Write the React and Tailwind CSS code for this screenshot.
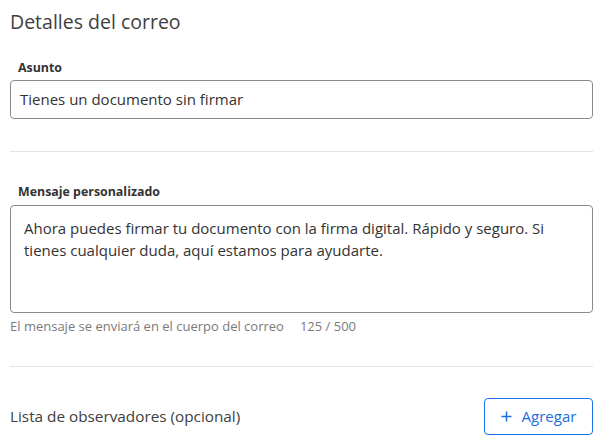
export default function App() {
  return (
    <div className="w-[606px] h-[446px] bg-white overflow-hidden font-['Open_Sans',sans-serif] text-[#3a3a3a]">
      <div className="px-[10px] pt-[10px] w-[603px]">
        <h2 className="text-[19.5px] leading-[24px] font-medium text-[#404040]">Detalles del correo</h2>

        <div className="mt-[26px] pl-[8px] text-[12.4px] leading-[16px] font-bold text-[#333]">Asunto</div>
        <div className="mt-[4px] h-[39px] border border-[#8a8a8a] rounded-[4px] flex items-center px-[9px] text-[15px] text-[#333]">
          Tienes un documento sin firmar
        </div>

        <div className="mt-[32px] h-px bg-[#e2e2e2]" />

        <div className="mt-[32px] pl-[8px] text-[12.4px] leading-[16px] font-bold text-[#333]">Mensaje personalizado</div>
        <div className="mt-[5px] h-[108px] border border-[#8a8a8a] rounded-[4px] px-[13px] pt-[11px] text-[15px] leading-[22px] text-[#333]">
          Ahora puedes firmar tu documento con la firma digital. Rápido y seguro. Si tienes cualquier duda, aquí estamos para ayudarte.
        </div>
        <div className="mt-[5px] flex text-[13px] leading-[16px] text-[#7a7a7a] font-medium">
          <span>El mensaje se enviará en el cuerpo del correo</span>
          <span className="ml-[16px]">125 / 500</span>
        </div>

        <div className="mt-[32px] h-px bg-[#e2e2e2]" />

        <div className="mt-[31px] flex items-center justify-between">
          <span className="text-[15.3px] text-[#404040]">Lista de observadores (opcional)</span>
          <button className="w-[109px] h-[37px] border border-[#1a73e8] rounded-[4px] flex items-center justify-center gap-[10px] text-[#1a6fe0] text-[15px] font-medium">
            <svg width="11" height="11" viewBox="0 0 11 11"><path d="M5.5 0.5v10M0.5 5.5h10" stroke="currentColor" strokeWidth="1.5" /></svg>
            Agregar
          </button>
        </div>
      </div>
    </div>
  );
}
